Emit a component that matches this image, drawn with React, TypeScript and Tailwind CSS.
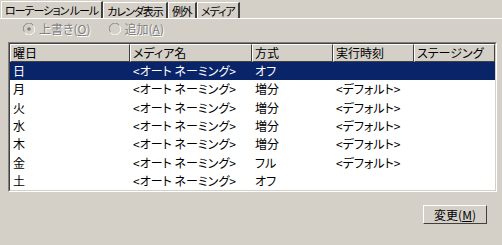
import React from "react";

const tabs = ["ローテーション ルール", "カレンダ表示", "例外", "メディア"];

const columns = [
  { label: "曜日", w: "w-[120px]" },
  { label: "メディア名", w: "w-[122px]" },
  { label: "方式", w: "w-[81px]" },
  { label: "実行時刻", w: "w-[81px]" },
  { label: "ステージング", w: "w-[81px]" },
];

const rows = [
  ["日", "<オート ネーミング>", "オフ", "", ""],
  ["月", "<オート ネーミング>", "増分", "<デフォルト>", ""],
  ["火", "<オート ネーミング>", "増分", "<デフォルト>", ""],
  ["水", "<オート ネーミング>", "増分", "<デフォルト>", ""],
  ["木", "<オート ネーミング>", "増分", "<デフォルト>", ""],
  ["金", "<オート ネーミング>", "フル", "<デフォルト>", ""],
  ["土", "<オート ネーミング>", "オフ", "", ""],
];

function Radio({ checked }: { checked?: boolean }) {
  return (
    <svg width="12" height="12" viewBox="0 0 12 12" className="shrink-0">
      <path d="M10 2 A5.5 5.5 0 0 0 1.2 8.5" fill="none" stroke="#808080" />
      <path d="M2 10 A5.5 5.5 0 0 0 10.8 3.5" fill="none" stroke="#ffffff" />
      <circle cx="6" cy="6" r="4.2" fill="#d4d0c8" />
      {checked && <circle cx="6" cy="6" r="1.8" fill="#808080" />}
    </svg>
  );
}

export default function App() {
  return (
    <div className='w-[502px] h-[245px] bg-[#d4d0c8] flex flex-col text-[12px] leading-[16px] text-black font-["Noto_Sans_CJK_JP","Noto_Sans",sans-serif] [font-feature-settings:"palt"] overflow-hidden'>
      {/* tabs */}
      <div className="flex items-end h-[18px] pl-[1px] text-[11px] tracking-[-1px]">
        {tabs.map((t, i) => (
          <div
            key={t}
            className={
              i === 0
                ? "h-[17px] flex items-center px-[3px] border-l border-t border-white border-r-2 border-r-[#404040] bg-[#d4d0c8]"
                : "h-[16px] flex items-center px-[3px] border-l border-t border-white border-r-2 border-r-[#404040]"
            }
          >
            <span className="whitespace-pre">{t}</span>
          </div>
        ))}
      </div>
      <div className="h-px bg-white shrink-0" />

      {/* radio row */}
      <div className="h-[20px] flex items-center pl-[23px] gap-[18px] text-[#808080] [text-shadow:1px_1px_0_#ffffff]">
        <div className="flex items-center gap-[4px]">
          <Radio checked />
          <span>
            上書き(<span className="underline">O</span>)
          </span>
        </div>
        <div className="flex items-center gap-[4px]">
          <Radio />
          <span>
            追加(<span className="underline">A</span>)
          </span>
        </div>
      </div>

      {/* list view */}
      <div className="mt-[3px] mx-[8px] w-[489px] h-[150px] border border-t-[#808080] border-l-[#808080] border-b-white border-r-white">
        <div className="w-full h-full border border-t-[#404040] border-l-[#404040] border-b-[#d4d0c8] border-r-[#d4d0c8] bg-white flex flex-col">
          <div className="flex h-[18px] shrink-0">
            {columns.map((c) => (
              <div
                key={c.label}
                className={`${c.w} h-full bg-[#d4d0c8] border-t border-l border-white border-r border-b border-r-[#404040] border-b-[#404040] flex items-center px-[2px] whitespace-nowrap`}
              >
                {c.label}
              </div>
            ))}
          </div>
          {rows.map((r, i) => (
            <div
              key={r[0]}
              className={`flex h-[18.3px] items-center shrink-0 ${
                i === 0 ? "bg-[#0a246a] text-white" : ""
              }`}
            >
              {r.map((cell, j) => (
                <div
                  key={j}
                  className={`${columns[j].w} shrink-0 px-[3px] whitespace-nowrap`}
                >
                  {cell}
                </div>
              ))}
            </div>
          ))}
        </div>
      </div>

      {/* button */}
      <div className="flex justify-end pr-[15px] mt-[13px]">
        <button className="w-[64px] h-[19px] border border-t-white border-l-white border-b-[#404040] border-r-[#404040] bg-[#d4d0c8] text-[12px] flex items-center justify-center">
          変更(<span className="underline">M</span>)
        </button>
      </div>
    </div>
  );
}
